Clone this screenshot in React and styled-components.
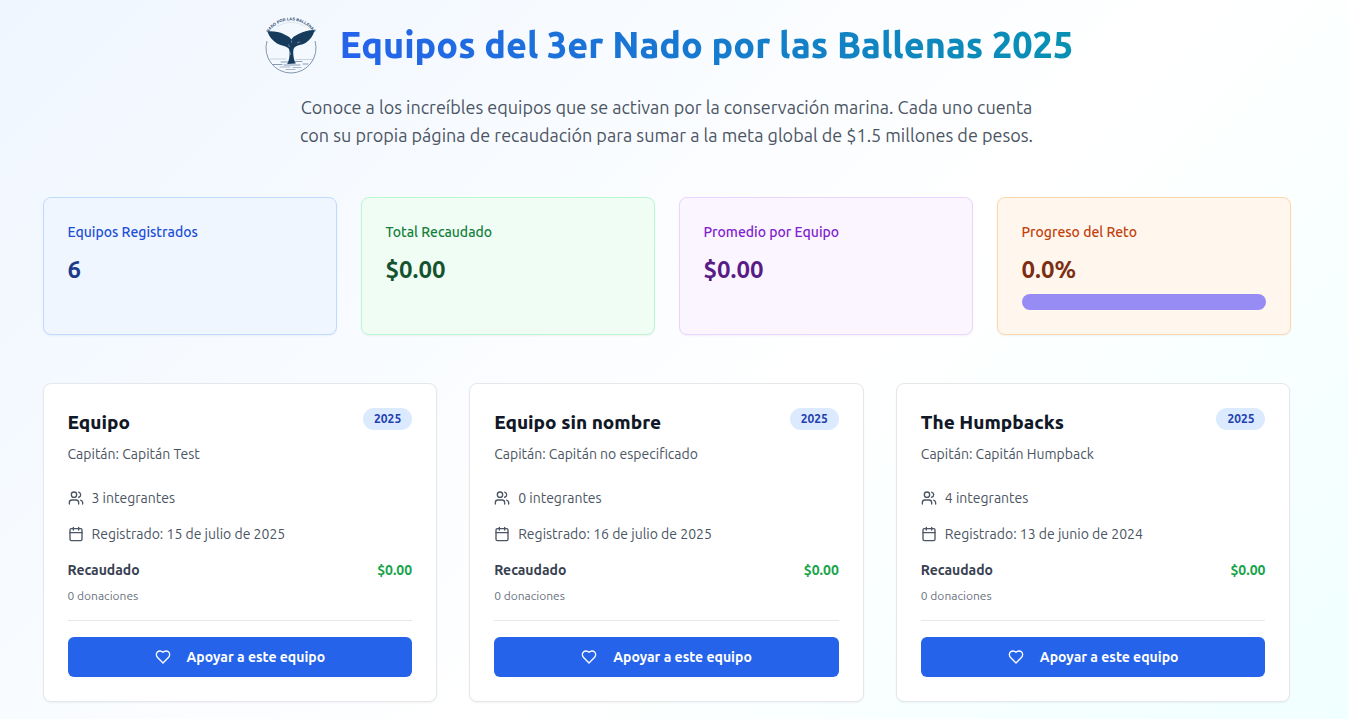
import React from "react";
import styled, { createGlobalStyle, css } from "styled-components";

const GlobalStyle = createGlobalStyle`
  *, *::before, *::after { box-sizing: border-box; }
  body {
    margin: 0;
    font-family: Ubuntu, Roboto, "Noto Sans", sans-serif;
    color: #111827;
  }
  h1, h2, h3, p { margin: 0; }
`;

const Page = styled.main`
  min-height: 100vh;
  padding: 13px 31px 16px 16px;
  background: linear-gradient(135deg, #eff6ff 0%, #ffffff 59%, #f0ffff 100%);
`;

const Container = styled.div`
  max-width: 1248px;
  margin: 0 auto;
`;

const Header = styled.header`
  display: flex;
  flex-direction: column;
  align-items: center;
  gap: 16px;
  margin-bottom: 48px;
  text-align: center;
`;

const Brand = styled.div`
  display: flex;
  align-items: center;
  gap: 16px;
`;

const Logo = styled.svg`
  width: 64px;
  height: 64px;
  flex: none;
`;

const Title = styled.h1`
  font-size: 36px;
  line-height: 48px;
  font-weight: 800;
  color: transparent;
  background: linear-gradient(90deg, #2563eb, #0891b2);
  background-clip: text;
  -webkit-background-clip: text;
`;

const Intro = styled.p`
  max-width: 760px;
  font-size: 18px;
  line-height: 28px;
  color: #4b5563;
`;

const Stats = styled.section`
  display: grid;
  grid-template-columns: repeat(auto-fit, minmax(240px, 1fr));
  gap: 24px;
  margin-bottom: 48px;
`;

const cardFrame = css`
  padding: 24px;
  border: 1px solid #e5e7eb;
  border-radius: 8px;
  box-shadow: 0 1px 2px rgba(0, 0, 0, 0.05);
`;

const tones = {
  blue: { back: "#eff6ff", edge: "#bfdbfe", label: "#1d4ed8", value: "#1e3a8a" },
  green: { back: "#f0fdf4", edge: "#bbf7d0", label: "#15803d", value: "#14532d" },
  purple: { back: "#faf5ff", edge: "#e9d5ff", label: "#7e22ce", value: "#581c87" },
  orange: { back: "#fff7ed", edge: "#fed7aa", label: "#c2410c", value: "#7c2d12" },
};

const StatCard = styled.article`
  ${cardFrame}
  background: ${(p) => tones[p.$tone].back};
  border-color: ${(p) => tones[p.$tone].edge};
`;

const StatLabel = styled.h2`
  font-size: 14px;
  line-height: 20px;
  font-weight: 500;
  color: ${(p) => tones[p.$tone].label};
`;

const StatValue = styled.p`
  margin-top: 12px;
  font-size: 24px;
  line-height: 32px;
  font-weight: 700;
  color: ${(p) => tones[p.$tone].value};
`;

const ProgressTrack = styled.div`
  height: 16px;
  margin-top: 8px;
  border-radius: 8px;
  background: #978bf4;
`;

const Teams = styled.section`
  display: grid;
  grid-template-columns: repeat(auto-fit, minmax(320px, 1fr));
  gap: 32px;
`;

const TeamCard = styled.article`
  ${cardFrame}
  background: #ffffff;
`;

const TeamTop = styled.div`
  display: flex;
  justify-content: space-between;
  align-items: flex-start;
`;

const TeamName = styled.h3`
  font-size: 19px;
  line-height: 28px;
  font-weight: 800;
`;

const Badge = styled.span`
  padding: 3px 11px;
  border-radius: 11px;
  background: #dbeafe;
  color: #1e40af;
  font-size: 12px;
  line-height: 16px;
  font-weight: 700;
`;

const Captain = styled.p`
  margin: 8px 0 24px;
  font-size: 14px;
  line-height: 20px;
  color: #4b5563;
`;

const Facts = styled.div`
  display: flex;
  flex-direction: column;
  gap: 16px;
`;

const Fact = styled.p`
  display: flex;
  align-items: center;
  gap: 8px;
  font-size: 14px;
  line-height: 20px;
  color: #4b5563;
`;

const Raised = styled.p`
  display: flex;
  justify-content: space-between;
  font-size: 14px;
  line-height: 20px;
  font-weight: 600;
  color: #374151;
`;

const Amount = styled.strong`
  font-weight: 700;
  color: #16a34a;
`;

const Donations = styled.p`
  margin-top: 8px;
  padding-bottom: 16px;
  border-bottom: 1px solid #e5e7eb;
  font-size: 12px;
  line-height: 16px;
  color: #6b7280;
`;

const SupportButton = styled.button`
  display: flex;
  align-items: center;
  justify-content: center;
  gap: 16px;
  width: 100%;
  height: 40px;
  margin-top: 16px;
  border: 0;
  border-radius: 6px;
  background: #2563eb;
  color: #ffffff;
  font-family: inherit;
  font-size: 14px;
  line-height: 20px;
  font-weight: 600;
  cursor: pointer;

  &:hover { background: #1d4ed8; }
`;

const IconSvg = styled.svg`
  width: 16px;
  height: 16px;
  flex: none;
  fill: none;
  stroke: currentColor;
  stroke-width: 2;
  stroke-linecap: round;
  stroke-linejoin: round;
`;

const UsersIcon = () => (
  <IconSvg viewBox="0 0 24 24" aria-hidden="true">
    <path d="M16 21v-2a4 4 0 0 0-4-4H6a4 4 0 0 0-4 4v2" />
    <circle cx="9" cy="7" r="4" />
    <path d="M22 21v-2a4 4 0 0 0-3-3.87" />
    <path d="M16 3.13a4 4 0 0 1 0 7.75" />
  </IconSvg>
);

const CalendarIcon = () => (
  <IconSvg viewBox="0 0 24 24" aria-hidden="true">
    <path d="M8 2v4M16 2v4M3 10h18" />
    <rect width="18" height="18" x="3" y="4" rx="2" />
  </IconSvg>
);

const HeartIcon = () => (
  <IconSvg viewBox="0 0 24 24" aria-hidden="true">
    <path d="M19 14c1.49-1.46 3-3.21 3-5.5A5.5 5.5 0 0 0 16.5 3c-1.76 0-3 .5-4.5 2-1.5-1.5-2.74-2-4.5-2A5.5 5.5 0 0 0 2 8.5c0 2.3 1.5 4.05 3 5.5l7 7Z" />
  </IconSvg>
);

const WhaleLogo = () => (
  <Logo viewBox="0 0 64 64" role="img" aria-label="Nado por las Ballenas">
    <defs>
      <path id="logo-arc" d="M5 27A27 27 0 0 1 57 27" />
    </defs>
    <path
      d="M7 28A25 25 0 1 0 55 28"
      fill="none"
      stroke="#8296ad"
      strokeWidth="1"
    />
    <path d="M17 13.500A25 25 0 0 1 45 13.500" fill="none" stroke="#c3cedb" strokeWidth=".5" />
    <text fontFamily="Liberation Sans, sans-serif" fontSize="4" fontWeight="700" fill="#1f3f5f">
      <textPath href="#logo-arc" startOffset="50%" textAnchor="middle">
        NADO POR LAS BALLENAS
      </textPath>
    </text>
    <path
      d="M7.500 18.500C13 18 19 18.800 24 21.200C27.500 22.800 29.800 24 31.300 26.400C32.500 24.100 35 22.800 38 21.200C43 18.600 48 17.200 54.500 17C53.500 22.500 50 27 45.500 30C41 32.400 36 32 33.800 35.500C32.600 38.500 33.400 46.500 35.800 50.500L27.200 51C29.600 47 30.200 39.500 29 36C27 32.600 21.500 33 17 30.400C12.500 27.500 8.800 23.500 7.500 18.500Z"
      fill="#173b5c"
    />
    <path d="M28.600 31.500l.8 2.600M30 39l.5 3M37 30l3-1.200M31.500 27.600v2.200" stroke="#b9c8d8" strokeWidth=".5" fill="none" />
    <g fill="none" stroke="#587492" strokeWidth=".7" strokeLinecap="round">
      <path d="M10 46h16M36 46.500h17" strokeWidth=".5" stroke="#9aacc0" />
      <path d="M21 49h7M35 48.500h7" />
      <path d="M13 51.500h9M24 52h16M43 51h5" />
      <path d="M20 54h10M33 54.500h8" strokeWidth=".5" />
      <path d="M26 56.500h9" strokeWidth=".5" />
    </g>
  </Logo>
);

const stats = [
  { tone: "blue", label: "Equipos Registrados", value: "6" },
  { tone: "green", label: "Total Recaudado", value: "$0.00" },
  { tone: "purple", label: "Promedio por Equipo", value: "$0.00" },
  { tone: "orange", label: "Progreso del Reto", value: "0.0%", progress: 0 },
];

const teams = [
  { name: "Equipo", captain: "Capitán Test", members: 3, date: "15 de julio de 2025" },
  { name: "Equipo sin nombre", captain: "Capitán no especificado", members: 0, date: "16 de julio de 2025" },
  { name: "The Humpbacks", captain: "Capitán Humpback", members: 4, date: "13 de junio de 2024" },
];

export default function App() {
  return (
    <Page>
      <GlobalStyle />
      <Container>
        <Header>
          <Brand>
            <WhaleLogo />
            <Title>Equipos del 3er Nado por las Ballenas 2025</Title>
          </Brand>
          <Intro>
            Conoce a los increíbles equipos que se activan por la conservación marina. Cada uno
            cuenta con su propia página de recaudación para sumar a la meta global de $1.5 millones
            de pesos.
          </Intro>
        </Header>

        <Stats>
          {stats.map((s) => (
            <StatCard key={s.label} $tone={s.tone}>
              <StatLabel $tone={s.tone}>{s.label}</StatLabel>
              <StatValue $tone={s.tone}>{s.value}</StatValue>
              {s.progress !== undefined && (
                <ProgressTrack
                  role="progressbar"
                  aria-label={s.label}
                  aria-valuemin={0}
                  aria-valuemax={100}
                  aria-valuenow={s.progress}
                />
              )}
            </StatCard>
          ))}
        </Stats>

        <Teams>
          {teams.map((t) => (
            <TeamCard key={t.name}>
              <TeamTop>
                <TeamName>{t.name}</TeamName>
                <Badge>2025</Badge>
              </TeamTop>
              <Captain>Capitán: {t.captain}</Captain>
              <Facts>
                <Fact>
                  <UsersIcon />
                  {t.members} integrantes
                </Fact>
                <Fact>
                  <CalendarIcon />
                  Registrado: {t.date}
                </Fact>
                <Raised>
                  Recaudado <Amount>$0.00</Amount>
                </Raised>
              </Facts>
              <Donations>0 donaciones</Donations>
              <SupportButton type="button">
                <HeartIcon />
                Apoyar a este equipo
              </SupportButton>
            </TeamCard>
          ))}
        </Teams>
      </Container>
    </Page>
  );
}
